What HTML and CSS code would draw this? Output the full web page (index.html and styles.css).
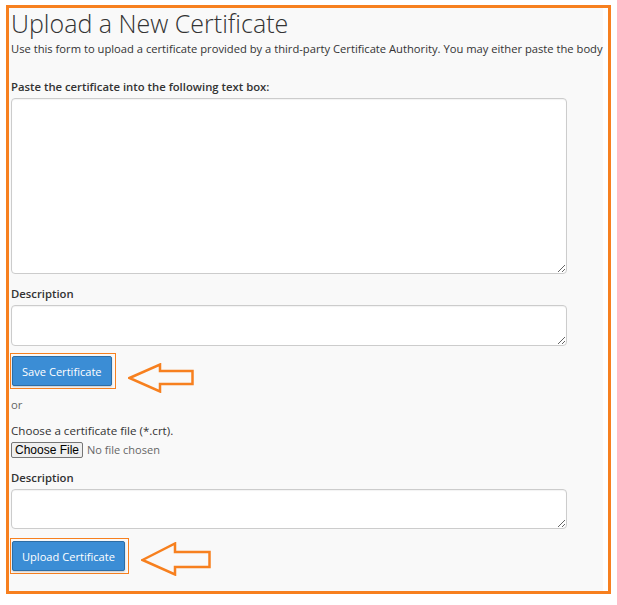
FILE: index.html
```html
<!DOCTYPE html>
<html lang="en">
<head>
    <meta charset="UTF-8">
    <meta name="viewport" content="width=device-width, initial-scale=1.0">
    <title>Upload a New Certificate</title>
    <link rel="stylesheet" href="styles.css">
</head>
<body>
    <div class="frame">
        <div class="panel">
            <h1 class="title">Upload a New Certificate</h1>
            <p class="intro">Use this form to upload a certificate provided by a third-party Certificate Authority. You may either paste the body</p>

            <form class="cert-form">
                <label class="field-label label-paste" for="crt">Paste the certificate into the following text box:</label>
                <textarea id="crt" class="box box-big"></textarea>

                <label class="field-label label-desc" for="desc1">Description</label>
                <textarea id="desc1" class="box box-small"></textarea>

                <div class="action-row">
                    <div class="hilite">
                        <button type="button" class="btn-primary">Save Certificate</button>
                    </div>
                    <svg class="arrow arrow-save" width="67" height="30" viewBox="0 0 67 30">
                        <polygon points="1.5,15 32,1.5 32,8 64.5,8 64.5,21 32,21 32,28.5" />
                    </svg>
                </div>

                <p class="or-text">or</p>

                <p class="file-text">Choose a certificate file (*.crt).</p>
                <input type="file" class="file-input">

                <label class="field-label label-desc2" for="desc2">Description</label>
                <textarea id="desc2" class="box box-small box-small2"></textarea>

                <div class="action-row upload-row">
                    <div class="hilite">
                        <button type="button" class="btn-primary">Upload Certificate</button>
                    </div>
                    <svg class="arrow arrow-upload" width="71" height="34" viewBox="0 0 71 34">
                        <polygon points="1.5,18 34,1.5 34,10 68.5,10 68.5,25 34,25 34,32.5" />
                    </svg>
                </div>
            </form>
        </div>
    </div>
</body>
</html>
```

FILE: styles.css
```css
*, *::before, *::after {
    box-sizing: border-box;
}
body {
    margin: 0;
    padding: 0;
    background-color: #fff;
    font-family: "Open Sans", "Liberation Sans", sans-serif;
    color: #333;
}
.frame {
    width: 605px;
    height: 589px;
    margin: 5px 0 0 6px;
    border: 3px solid #f7801f;
    background-color: #fff;
}
.panel {
    display: flow-root;
    height: 100%;
    margin-right: 5px;
    padding: 0 0 0 2px;
    background-color: #f9f9f9;
}
.title {
    margin: -2px 0 0;
    font-size: 25px;
    font-weight: 300;
    line-height: 34px;
    color: #333;
}
.intro {
    margin: 1px 0 0;
    font-size: 11.2px;
    line-height: 16px;
    white-space: nowrap;
}
.cert-form {
    display: flex;
    flex-direction: column;
    align-items: flex-start;
}
.field-label {
    display: block;
    font-size: 11.3px;
    font-weight: 600;
    line-height: 16px;
}
.label-paste {
    margin-top: 22px;
}
.label-desc {
    margin-top: 12px;
}
.label-desc2 {
    margin-top: 12px;
}
.box {
    display: block;
    width: 556px;
    margin-top: 3px;
    border: 1px solid #ccc;
    border-radius: 4px;
    background-color: #fff;
    box-shadow: inset 0 1px 1px rgba(0, 0, 0, 0.05);
    font-family: inherit;
    font-size: 11px;
}
.box-big {
    height: 176px;
}
.box-small {
    height: 41px;
}
.box-small2 {
    height: 40px;
}
.action-row {
    display: flex;
    align-items: flex-start;
    margin-top: 7px;
}
.upload-row {
    margin-top: 9px;
}
.hilite {
    padding: 2px 3px 2px 1px;
    margin-left: -1px;
    border: 1px solid #f7801f;
}
.btn-primary {
    display: block;
    height: 30px;
    padding: 0 9px;
    border: 1px solid #2e6da4;
    border-radius: 2px;
    background-color: #3b8dd5;
    color: #fff;
    font-family: "Open Sans", "Liberation Sans", sans-serif;
    font-size: 11.1px;
    font-weight: 400;
    box-shadow: 0 1px 2px rgba(0, 0, 0, 0.2);
}
.arrow {
    margin-left: 12px;
}
.arrow polygon {
    fill: none;
    stroke: #f7801f;
    stroke-width: 2.5;
    stroke-linejoin: miter;
}
.arrow-save {
    margin-top: 10px;
}
.arrow-upload {
    margin-top: 4px;
}
.or-text {
    margin: 4px 0 0;
    font-size: 11.3px;
    line-height: 16px;
    color: #666;
}
.file-text {
    margin: 10px 0 0;
    font-size: 11.6px;
    line-height: 16px;
}
.file-input {
    height: 16px;
    margin: 3px 0 0;
    font-family: "Open Sans", "Liberation Sans", sans-serif;
    font-size: 11px;
    line-height: 16px;
    color: #666;
}
.file-input::file-selector-button {
    height: 16px;
    font-family: "Liberation Sans", Arial, sans-serif;
    font-size: 12px;
    line-height: 14px;
    color: #000;
    padding: 0 3px;
    margin-right: 4px;
    border: 1px solid #767676;
    border-radius: 2px;
    background-color: #efefef;
}
```
